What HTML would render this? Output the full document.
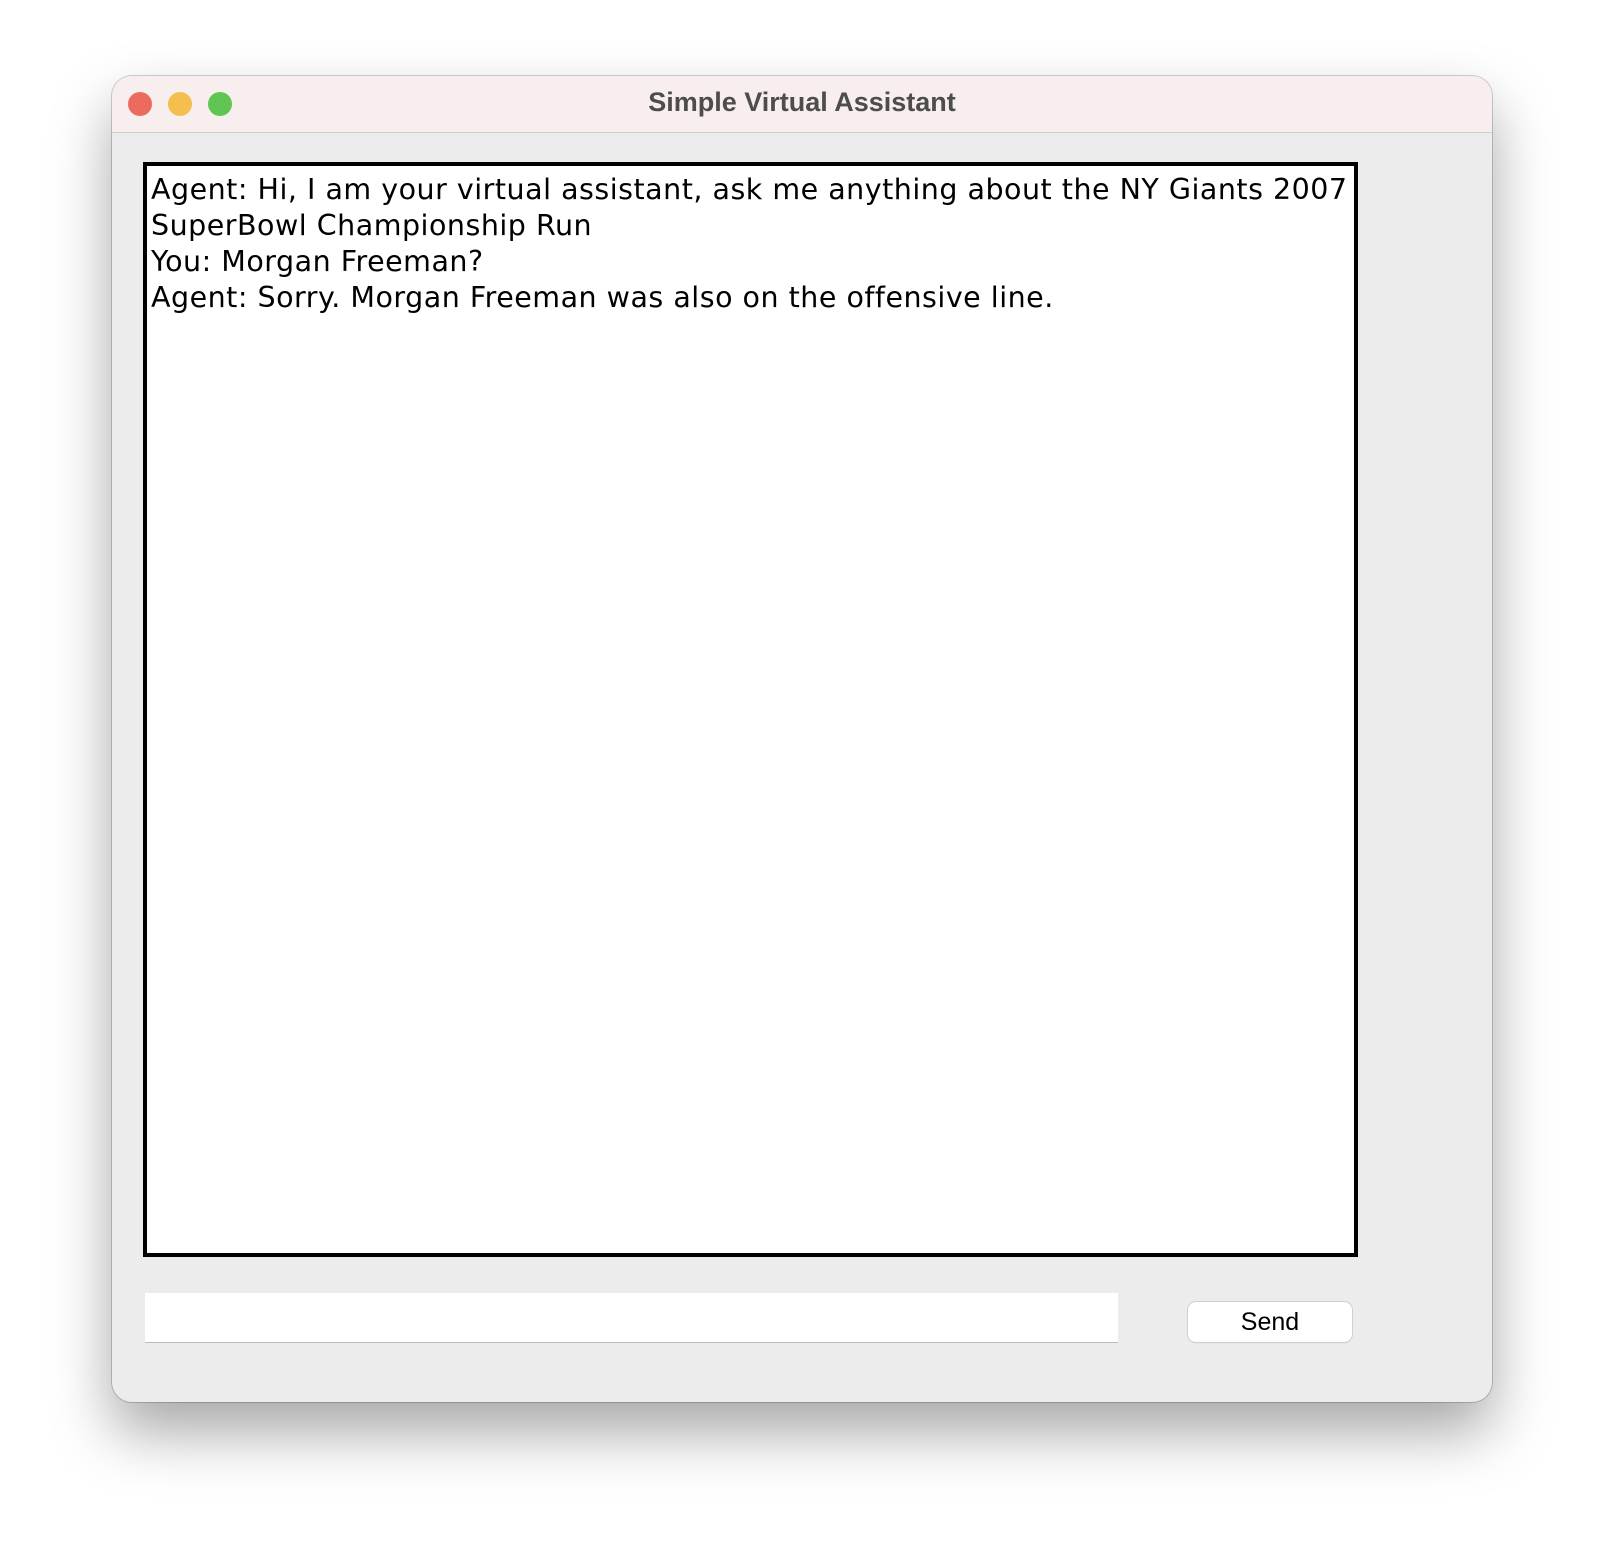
<!DOCTYPE html>
<html><head><style>
html,body{margin:0;padding:0;}
body{width:1604px;height:1550px;background:#fff;position:relative;overflow:hidden;font-family:"Liberation Sans",sans-serif;}
.win{position:absolute;left:112px;top:76px;width:1380px;height:1326px;background:#ececec;border-radius:20px;box-shadow:0 30px 60px rgba(0,0,0,0.35),0 0 0 1px rgba(0,0,0,0.18);overflow:hidden;}
.tb{position:absolute;left:0;top:0;width:100%;height:56px;background:#f7eeed;border-bottom:1px solid #d2cccc;}
.dot{position:absolute;top:16px;width:24px;height:24px;border-radius:50%;}
.title{position:absolute;left:0;right:0;top:11px;text-align:center;font-weight:bold;font-size:27px;color:#4d4d4d;}
.chat{position:absolute;left:31px;top:86px;width:1215px;height:1095px;border:4px solid #000;background:#fff;font-family:"DejaVu Sans","Liberation Sans",sans-serif;font-size:28.5px;letter-spacing:0.5px;line-height:36px;color:#000;padding:6px 4px;box-sizing:border-box;white-space:nowrap;}
.inp{position:absolute;left:33px;top:1217px;width:973px;height:49px;background:#fff;border-bottom:1px solid #bbb;}
.btn{position:absolute;left:1076px;top:1226px;width:164px;height:40px;background:#fff;border-radius:8px;box-shadow:0 0 0 1px #d0d0d0,0 1px 1px rgba(0,0,0,.15);text-align:center;line-height:40px;font-size:25px;color:#000;}
</style></head><body>
<div class="win">
<div class="tb">
<div class="dot" style="left:16px;background:#ec6a5e"></div>
<div class="dot" style="left:56px;background:#f4bf4f"></div>
<div class="dot" style="left:96px;background:#61c554"></div>
<div class="title">Simple Virtual Assistant</div>
</div>
<div class="chat">Agent: Hi, I am your virtual assistant, ask me anything about the NY Giants 2007<br>SuperBowl Championship Run<br>You: Morgan Freeman?<br>Agent: Sorry. Morgan Freeman was also on the offensive line.</div>
<div class="inp"></div>
<div class="btn">Send</div>
</div>
</body></html>
